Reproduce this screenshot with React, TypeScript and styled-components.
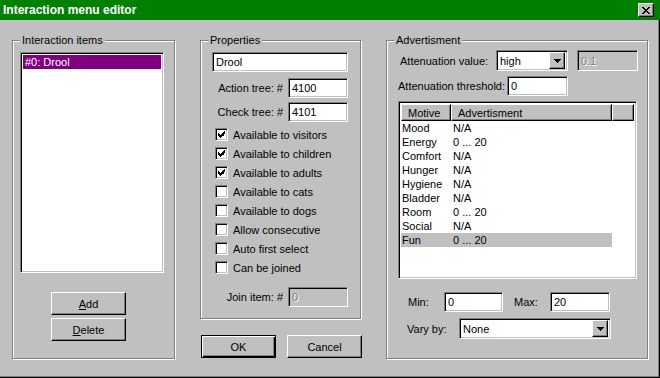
import React from 'react';
import styled, { createGlobalStyle, css } from 'styled-components';

const motives = [
  { name: 'Mood', value: 'N/A' },
  { name: 'Energy', value: '0 ... 20' },
  { name: 'Comfort', value: 'N/A' },
  { name: 'Hunger', value: 'N/A' },
  { name: 'Hygiene', value: 'N/A' },
  { name: 'Bladder', value: 'N/A' },
  { name: 'Room', value: '0 ... 20' },
  { name: 'Social', value: 'N/A' },
  { name: 'Fun', value: '0 ... 20', selected: true },
];

const options = [
  { label: 'Available to visitors', checked: true },
  { label: 'Available to children', checked: true },
  { label: 'Available to adults', checked: true },
  { label: 'Available to cats', checked: false },
  { label: 'Available to dogs', checked: false },
  { label: 'Allow consecutive', checked: false },
  { label: 'Auto first select', checked: false },
  { label: 'Can be joined', checked: false },
];

const CheckMark = () => (
  <svg width="7" height="7" viewBox="0 0 7 7" shapeRendering="crispEdges">
    <path
      fill="#000"
      d="M6 0h1v3h-1zM5 1h1v4h-1zM4 2h1v3h-1zM0 2h1v3h-1zM1 3h1v3h-1zM3 3h1v3h-1zM2 4h1v3h-1z"
    />
  </svg>
);

const DropArrow = () => (
  <svg width="7" height="4" viewBox="0 0 7 4" shapeRendering="crispEdges">
    <path fill="#000" d="M0 0h7v1h-7zM1 1h5v1h-5zM2 2h3v1h-3zM3 3h1v1h-1z" />
  </svg>
);

const CloseGlyph = () => (
  <svg width="8" height="7" viewBox="0 0 8 7" shapeRendering="crispEdges">
    <path
      fill="#000"
      d="M0 0h2v1h-2zM6 0h2v1h-2zM1 1h2v1h-2zM5 1h2v1h-2zM2 2h4v1h-4zM3 3h2v1h-2zM2 4h4v1h-4zM1 5h2v1h-2zM5 5h2v1h-2zM0 6h2v1h-2zM6 6h2v1h-2z"
    />
  </svg>
);

export default function App() {
  return (
    <>
      <GlobalStyle />
      <Window>
        <TitleBar>
          <Title>Interaction menu editor</Title>
          <CloseButton>
            <CloseGlyph />
          </CloseButton>
        </TitleBar>
        <Body>
          <Group $width={163} $height={319}>
            <Legend>Interaction items</Legend>
            <ItemList>
              <ItemRow $selected>#0: Drool</ItemRow>
            </ItemList>
            <ButtonStack>
              <PushButton>
                <u>A</u>dd
              </PushButton>
              <PushButton>
                <u>D</u>elete
              </PushButton>
            </ButtonStack>
          </Group>

          <Column>
            <PropsGroup $width={161} $height={279}>
              <Legend>Properties</Legend>
              <TextField $width={136}>Drool</TextField>
              <FieldRow $mt={6}>
                <FieldLabel>Action tree: #</FieldLabel>
                <TextField $width={60}>4100</TextField>
              </FieldRow>
              <FieldRow $mt={4}>
                <FieldLabel>Check tree: #</FieldLabel>
                <TextField $width={60}>4101</TextField>
              </FieldRow>
              <CheckList>
                {options.map((o) => (
                  <CheckRow key={o.label}>
                    <CheckBox>{o.checked && <CheckMark />}</CheckBox>
                    <span>{o.label}</span>
                  </CheckRow>
                ))}
              </CheckList>
              <FieldRow $mt={10}>
                <FieldLabel>Join item: #</FieldLabel>
                <TextField $width={60} $disabled>
                  0
                </TextField>
              </FieldRow>
            </PropsGroup>
            <ButtonRow>
              <PushButton $default>OK</PushButton>
              <PushButton>Cancel</PushButton>
            </ButtonRow>
          </Column>

          <AdvertGroup $width={262} $height={319}>
            <Legend>Advertisment</Legend>
            <AdvRow $indent={2}>
              <FixedLabel $width={96}>Attenuation value:</FixedLabel>
              <ComboBox $width={72}>
                <ComboText>high</ComboText>
                <DropButton>
                  <DropArrow />
                </DropButton>
              </ComboBox>
              <Spacer $width={9} />
              <TextField $width={61} $height={21} $disabled>
                0.1
              </TextField>
            </AdvRow>
            <AdvRow $mt={5}>
              <FixedLabel $width={109}>Attenuation threshold:</FixedLabel>
              <TextField $width={61}>0</TextField>
            </AdvRow>
            <ListView>
              <HeaderRow>
                <HeaderCell $width={50}>Motive</HeaderCell>
                <HeaderCell $width={161}>Advertisment</HeaderCell>
                <HeaderCell />
              </HeaderRow>
              {motives.map((m) => (
                <MotiveRow key={m.name} $selected={m.selected}>
                  <MotiveCell $width={51}>{m.name}</MotiveCell>
                  <MotiveCell $width={160}>{m.value}</MotiveCell>
                </MotiveRow>
              ))}
            </ListView>
            <AdvRow $mt={13} $indent={10}>
              <FixedLabel $width={36}>Min:</FixedLabel>
              <TextField $width={59}>0</TextField>
              <Spacer $width={11} />
              <FixedLabel $width={36}>Max:</FixedLabel>
              <TextField $width={60}>20</TextField>
            </AdvRow>
            <AdvRow $mt={6} $indent={9}>
              <FixedLabel $width={52}>Vary by:</FixedLabel>
              <ComboBox $width={152}>
                <ComboText>None</ComboText>
                <DropButton>
                  <DropArrow />
                </DropButton>
              </ComboBox>
            </AdvRow>
          </AdvertGroup>
        </Body>
      </Window>
    </>
  );
}

const GlobalStyle = createGlobalStyle`
  html, body {
    margin: 0;
    padding: 0;
    background: #c0c0c0;
  }
  body {
    font-family: 'Liberation Sans', Arial, sans-serif;
    font-size: 11px;
    color: #000;
  }
  * {
    box-sizing: border-box;
  }
`;

const sunken = css`
  border: 1px solid;
  border-color: #808080 #fff #fff #808080;
  box-shadow: inset 1px 1px #000, inset -1px -1px #c0c0c0;
`;

const raised = css`
  border: 1px solid;
  border-color: #fff #000 #000 #fff;
  box-shadow: inset -1px -1px #808080;
`;

const Window = styled('div')`
  width: 660px;
  height: 378px;
  background: #c0c0c0;
  box-shadow: inset -1px -1px #000, inset -2px -2px #808080;
  overflow: hidden;
`;

const TitleBar = styled('div')`
  height: 20px;
  background: #008000;
  display: flex;
  align-items: center;
  justify-content: space-between;
  padding: 0 6px 0 3px;
`;

const Title = styled('span')`
  color: #fff;
  font-weight: bold;
  font-size: 12px;
`;

const CloseButton = styled('div')`
  ${raised};
  width: 16px;
  height: 14px;
  background: #c0c0c0;
  display: flex;
  align-items: center;
  justify-content: center;
  padding-right: 1px;
`;

const Body = styled('div')`
  display: flex;
  align-items: flex-start;
  padding: 20px 0 0 12px;
`;

const Group = styled('div')<{ $width: number; $height: number }>`
  position: relative;
  width: ${(p) => p.$width}px;
  height: ${(p) => p.$height}px;
  border: 1px solid #808080;
  box-shadow: inset 1px 1px #fff, 1px 1px #fff;
  display: flex;
  flex-direction: column;
  padding: 11px 0 0 7px;
`;

const PropsGroup = styled(Group)`
  padding: 11px 12px 0 11px;
`;

const AdvertGroup = styled(Group)`
  margin-left: 24px;
  padding: 9px 0 0 11px;
`;

const Legend = styled('span')`
  position: absolute;
  top: -7px;
  left: 7px;
  padding: 0 2px;
  line-height: 13px;
  background: #c0c0c0;
`;

const ItemList = styled('div')`
  ${sunken};
  width: 144px;
  height: 221px;
  background: #fff;
  padding: 2px;
`;

const ItemRow = styled('div')<{ $selected?: boolean }>`
  height: 14px;
  line-height: 14px;
  padding-left: 2px;
  background: ${(p) => (p.$selected ? '#800080' : 'transparent')};
  color: ${(p) => (p.$selected ? '#fff' : '#000')};
`;

const ButtonStack = styled('div')`
  display: flex;
  flex-direction: column;
  gap: 3px;
  margin: 19px 0 0 31px;
`;

const PushButton = styled('div')<{ $default?: boolean }>`
  width: 75px;
  height: 23px;
  display: flex;
  align-items: center;
  justify-content: center;
  background: #c0c0c0;
  ${(p) =>
    p.$default
      ? css`
          border: 1px solid #000;
          box-shadow: inset 1px 1px #fff, inset -1px -1px #000, inset -2px -2px #808080;
        `
      : raised};
  u {
    text-decoration: underline;
    text-underline-offset: 1px;
  }
`;

const Column = styled('div')`
  display: flex;
  flex-direction: column;
  margin-left: 25px;
`;

const ButtonRow = styled('div')`
  display: flex;
  gap: 11px;
  margin-top: 16px;
  padding-left: 1px;
`;

const FieldRow = styled('div')<{ $mt: number }>`
  display: flex;
  align-items: center;
  justify-content: flex-end;
  gap: 5px;
  margin-top: ${(p) => p.$mt}px;
`;

const FieldLabel = styled('span')`
  white-space: nowrap;
`;

const TextField = styled('div')<{ $width: number; $height?: number; $disabled?: boolean }>`
  ${sunken};
  width: ${(p) => p.$width}px;
  height: ${(p) => p.$height ?? 20}px;
  flex: none;
  display: flex;
  align-items: center;
  padding-left: 3px;
  background: ${(p) => (p.$disabled ? '#c0c0c0' : '#fff')};
  color: ${(p) => (p.$disabled ? '#808080' : '#000')};
  text-shadow: ${(p) => (p.$disabled ? '1px 1px #fff' : 'none')};
`;

const CheckList = styled('div')`
  display: flex;
  flex-direction: column;
  margin-top: 3px;
`;

const CheckRow = styled('div')`
  height: 19px;
  display: flex;
  align-items: center;
  gap: 5px;
  padding-left: 3px;
`;

const CheckBox = styled('div')`
  ${sunken};
  width: 13px;
  height: 13px;
  background: #fff;
  display: flex;
  align-items: center;
  justify-content: center;
`;

const AdvRow = styled('div')<{ $mt?: number; $indent?: number }>`
  display: flex;
  align-items: center;
  margin-top: ${(p) => p.$mt ?? 0}px;
  padding-left: ${(p) => p.$indent ?? 0}px;
`;

const FixedLabel = styled('span')<{ $width: number }>`
  width: ${(p) => p.$width}px;
  flex: none;
  white-space: nowrap;
`;

const Spacer = styled('div')<{ $width: number }>`
  width: ${(p) => p.$width}px;
  flex: none;
`;

const ComboBox = styled('div')<{ $width: number }>`
  ${sunken};
  width: ${(p) => p.$width}px;
  height: 21px;
  flex: none;
  background: #fff;
  display: flex;
  align-items: center;
  padding: 2px;
`;

const ComboText = styled('span')`
  flex: 1;
  padding-left: 1px;
`;

const DropButton = styled('div')`
  ${raised};
  width: 16px;
  height: 17px;
  background: #c0c0c0;
  display: flex;
  align-items: center;
  justify-content: center;
`;

const ListView = styled('div')`
  ${sunken};
  width: 239px;
  height: 178px;
  margin-top: 5px;
  background: #fff;
  padding: 2px;
  display: flex;
  flex-direction: column;
`;

const HeaderRow = styled('div')`
  display: flex;
  height: 17px;
  flex: none;
`;

const HeaderCell = styled('div')<{ $width?: number }>`
  ${raised};
  background: #c0c0c0;
  ${(p) => (p.$width ? `width: ${p.$width}px; flex: none;` : 'flex: 1;')}
  display: flex;
  align-items: center;
  padding-left: 6px;
`;

const MotiveRow = styled('div')<{ $selected?: boolean }>`
  display: flex;
  width: 211px;
  height: 14px;
  line-height: 14px;
  background: ${(p) => (p.$selected ? '#c0c0c0' : 'transparent')};
`;

const MotiveCell = styled('span')<{ $width: number }>`
  width: ${(p) => p.$width}px;
  padding-left: 1px;
  white-space: nowrap;
`;
